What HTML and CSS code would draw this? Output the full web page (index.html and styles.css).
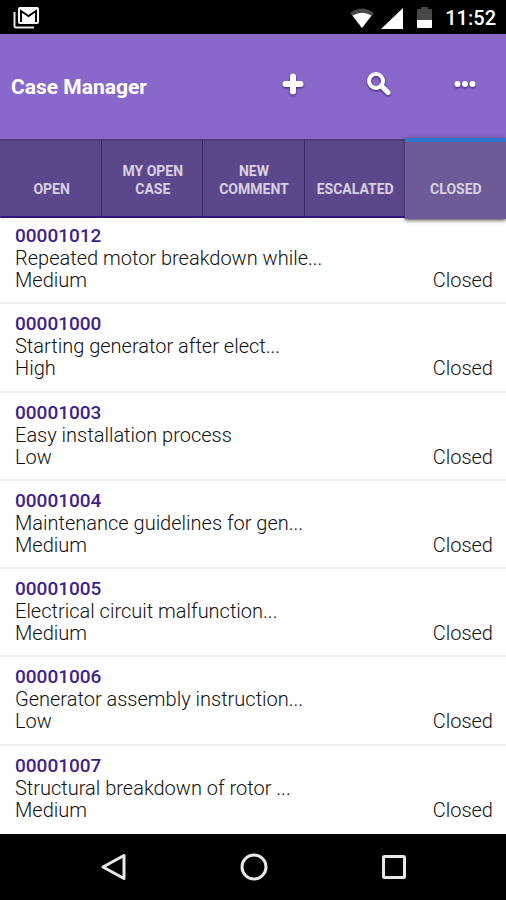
FILE: index.html
```html
<!DOCTYPE html>
<html lang="en">
<head>
<meta charset="utf-8">
<meta name="viewport" content="width=device-width, initial-scale=1">
<title>Case Manager</title>
<link rel="stylesheet" href="styles.css">
</head>
<body>
<div class="status">
  <svg class="mail" width="26" height="22" viewBox="0 0 26 22" aria-hidden="true">
    <path d="M1.500 5v14q0 1.500 1.500 1.500h18" fill="none" stroke="#e4e4e4" stroke-width="2"/>
    <rect x="5" y="0" width="21" height="17" rx="2" fill="#fff"/>
    <path d="M8 15V4l7.500 5L23 4v11" fill="none" stroke="#000" stroke-width="2"/>
  </svg>
  <svg width="24" height="20" viewBox="0 0 24 20" aria-hidden="true">
    <path d="M0 5Q12-4 24 5L12 20Z" fill="#484848"/>
    <path d="M2.500 7.500Q12 2 21.500 7.500L12 20Z" fill="#fff"/>
  </svg>
  <svg class="signal" width="22" height="21" viewBox="0 0 22 21" aria-hidden="true"><path d="M22 0v21H0Z" fill="#fff"/></svg>
  <svg class="battery" width="15" height="22" viewBox="0 0 15 22" aria-hidden="true">
    <path d="M1 2h3V0h7v2h3q1 0 1 1v10H0V3q0-1 1-1Z" fill="#484848"/>
    <path d="M0 13h15v7q0 1-1 1H1q-1 0-1-1Z" fill="#fff"/>
  </svg>
  <time>11:52</time>
</div>
<header class="bar">
  <h1>Case Manager</h1>
  <div class="actions">
    <button type="button" aria-label="New case"><svg width="24" height="24" viewBox="0 0 24 24"><path d="M12 4.500v15M4.500 12h15" fill="none" stroke="#fff" stroke-width="6" stroke-linecap="round"/></svg></button>
    <button type="button" aria-label="Search"><svg width="24" height="24" viewBox="0 0 24 24"><circle cx="9" cy="9" r="7" fill="none" stroke="#fff" stroke-width="4"/><path d="M14.500 14l6.500 6.500" stroke="#fff" stroke-width="5" stroke-linecap="round"/></svg></button>
    <button type="button" aria-label="More"><svg width="24" height="24" viewBox="0 0 24 24"><g fill="#fff"><circle cx="4.500" cy="12" r="3"/><circle cx="12" cy="12" r="3"/><circle cx="19.500" cy="12" r="3"/></g></svg></button>
  </div>
</header>
<nav class="tabs">
  <button type="button">OPEN</button>
  <button type="button">MY OPEN CASE</button>
  <button type="button">NEW COMMENT</button>
  <button type="button">ESCALATED</button>
  <button type="button" class="active" aria-current="page">CLOSED</button>
</nav>
<main class="cases">
  <article><a href="#">00001012</a><p>Repeated motor breakdown while...</p><div class="meta"><span>Medium</span><span>Closed</span></div></article>
  <article><a href="#">00001000</a><p>Starting generator after elect...</p><div class="meta"><span>High</span><span>Closed</span></div></article>
  <article><a href="#">00001003</a><p>Easy installation process</p><div class="meta"><span>Low</span><span>Closed</span></div></article>
  <article><a href="#">00001004</a><p>Maintenance guidelines for gen...</p><div class="meta"><span>Medium</span><span>Closed</span></div></article>
  <article><a href="#">00001005</a><p>Electrical circuit malfunction...</p><div class="meta"><span>Medium</span><span>Closed</span></div></article>
  <article><a href="#">00001006</a><p>Generator assembly instruction...</p><div class="meta"><span>Low</span><span>Closed</span></div></article>
  <article><a href="#">00001007</a><p>Structural breakdown of rotor ...</p><div class="meta"><span>Medium</span><span>Closed</span></div></article>
</main>
<footer class="system">
  <button type="button" aria-label="Back"><svg width="28" height="28" viewBox="0 0 28 28"><path d="M24 2.500v23L3 14Z"/></svg></button>
  <button type="button" aria-label="Home"><svg width="28" height="28" viewBox="0 0 28 28"><circle cx="14" cy="14" r="12"/></svg></button>
  <button type="button" aria-label="Recent apps"><svg width="28" height="28" viewBox="0 0 28 28"><rect x="3.500" y="3.500" width="21" height="21" rx="1"/></svg></button>
</footer>
</body>
</html>
```
FILE: styles.css
```css
* {
  box-sizing: border-box;
}

body {
  margin: 0;
  min-height: 100vh;
  display: flex;
  flex-direction: column;
  background: #fff;
  color: #111;
  font-family: Roboto, "Liberation Sans", sans-serif;
  font-size: 20px;
  font-weight: 350;
  line-height: 22px;
}

button {
  margin: 0;
  padding: 0;
  border: 0;
  background: none;
  color: inherit;
  font: inherit;
}

svg {
  display: block;
}

.status {
  display: flex;
  align-items: center;
  height: 34px;
  padding: 2px 10px 0 13px;
  background: #000;
  color: #fff;
  font-weight: 500;
}

.mail {
  margin-right: auto;
}

.signal {
  margin-left: 7px;
}

.battery {
  margin: 0 13px 0 14px;
}

.bar {
  display: flex;
  align-items: center;
  justify-content: space-between;
  height: 105px;
  padding: 0 11px;
  background: #8968cb;
  color: #fff;
}

.bar h1 {
  margin: 0;
  font-size: 21px;
  font-weight: 700;
}

.actions {
  display: flex;
  gap: 38px;
  padding-bottom: 6px;
}

.actions button {
  display: grid;
  place-items: center;
  width: 48px;
  height: 48px;
}

.actions button:last-child {
  margin-right: 6px;
}

.actions svg {
  filter: drop-shadow(0 1px 1px #35205c);
}

.tabs {
  position: relative;
  display: grid;
  grid-template-columns: repeat(5, minmax(0, 1fr));
  height: 79px;
  background: #5d478b;
  color: #d8d1e3;
  font-size: 14px;
  font-weight: 700;
  line-height: 18px;
}

.tabs button {
  display: flex;
  align-items: flex-end;
  justify-content: center;
  padding: 0 9px 18px 10px;
  border-top: 2px solid #4e3a78;
  border-left: 1px solid #3a2860;
  border-bottom: 2px solid #3a1382;
}

.tabs button:first-child {
  border-left-color: transparent;
}

.tabs .active {
  margin: -1px 0 -1px;
  padding-bottom: 21px;
  border-top: 4px solid #2f75ce;
  border-left: 0;
  border-bottom: 0;
  background: #6e5a96;
  box-shadow: 0 1px 4px #333;
}

.cases {
  flex: 1;
  display: grid;
  grid-auto-rows: 1fr;
  margin-top: -2px;
}

.cases article {
  padding: 9px 13px 8px 15px;
  border-bottom: 2px solid #f0f0f0;
}

.cases article:last-child {
  border-bottom-color: #fff;
}

.cases a {
  display: block;
  color: #3f1f8a;
  font-size: 19px;
  font-weight: 500;
  text-decoration: none;
}

.cases p {
  margin: 0;
}

.meta {
  display: flex;
  justify-content: space-between;
}

.system {
  display: flex;
  align-items: center;
  justify-content: center;
  gap: 112px;
  height: 66px;
  padding-left: 1px;
  background: #000;
}

.system svg {
  fill: none;
  stroke: #e8e8e8;
  stroke-width: 3;
  stroke-linejoin: round;
}
```
